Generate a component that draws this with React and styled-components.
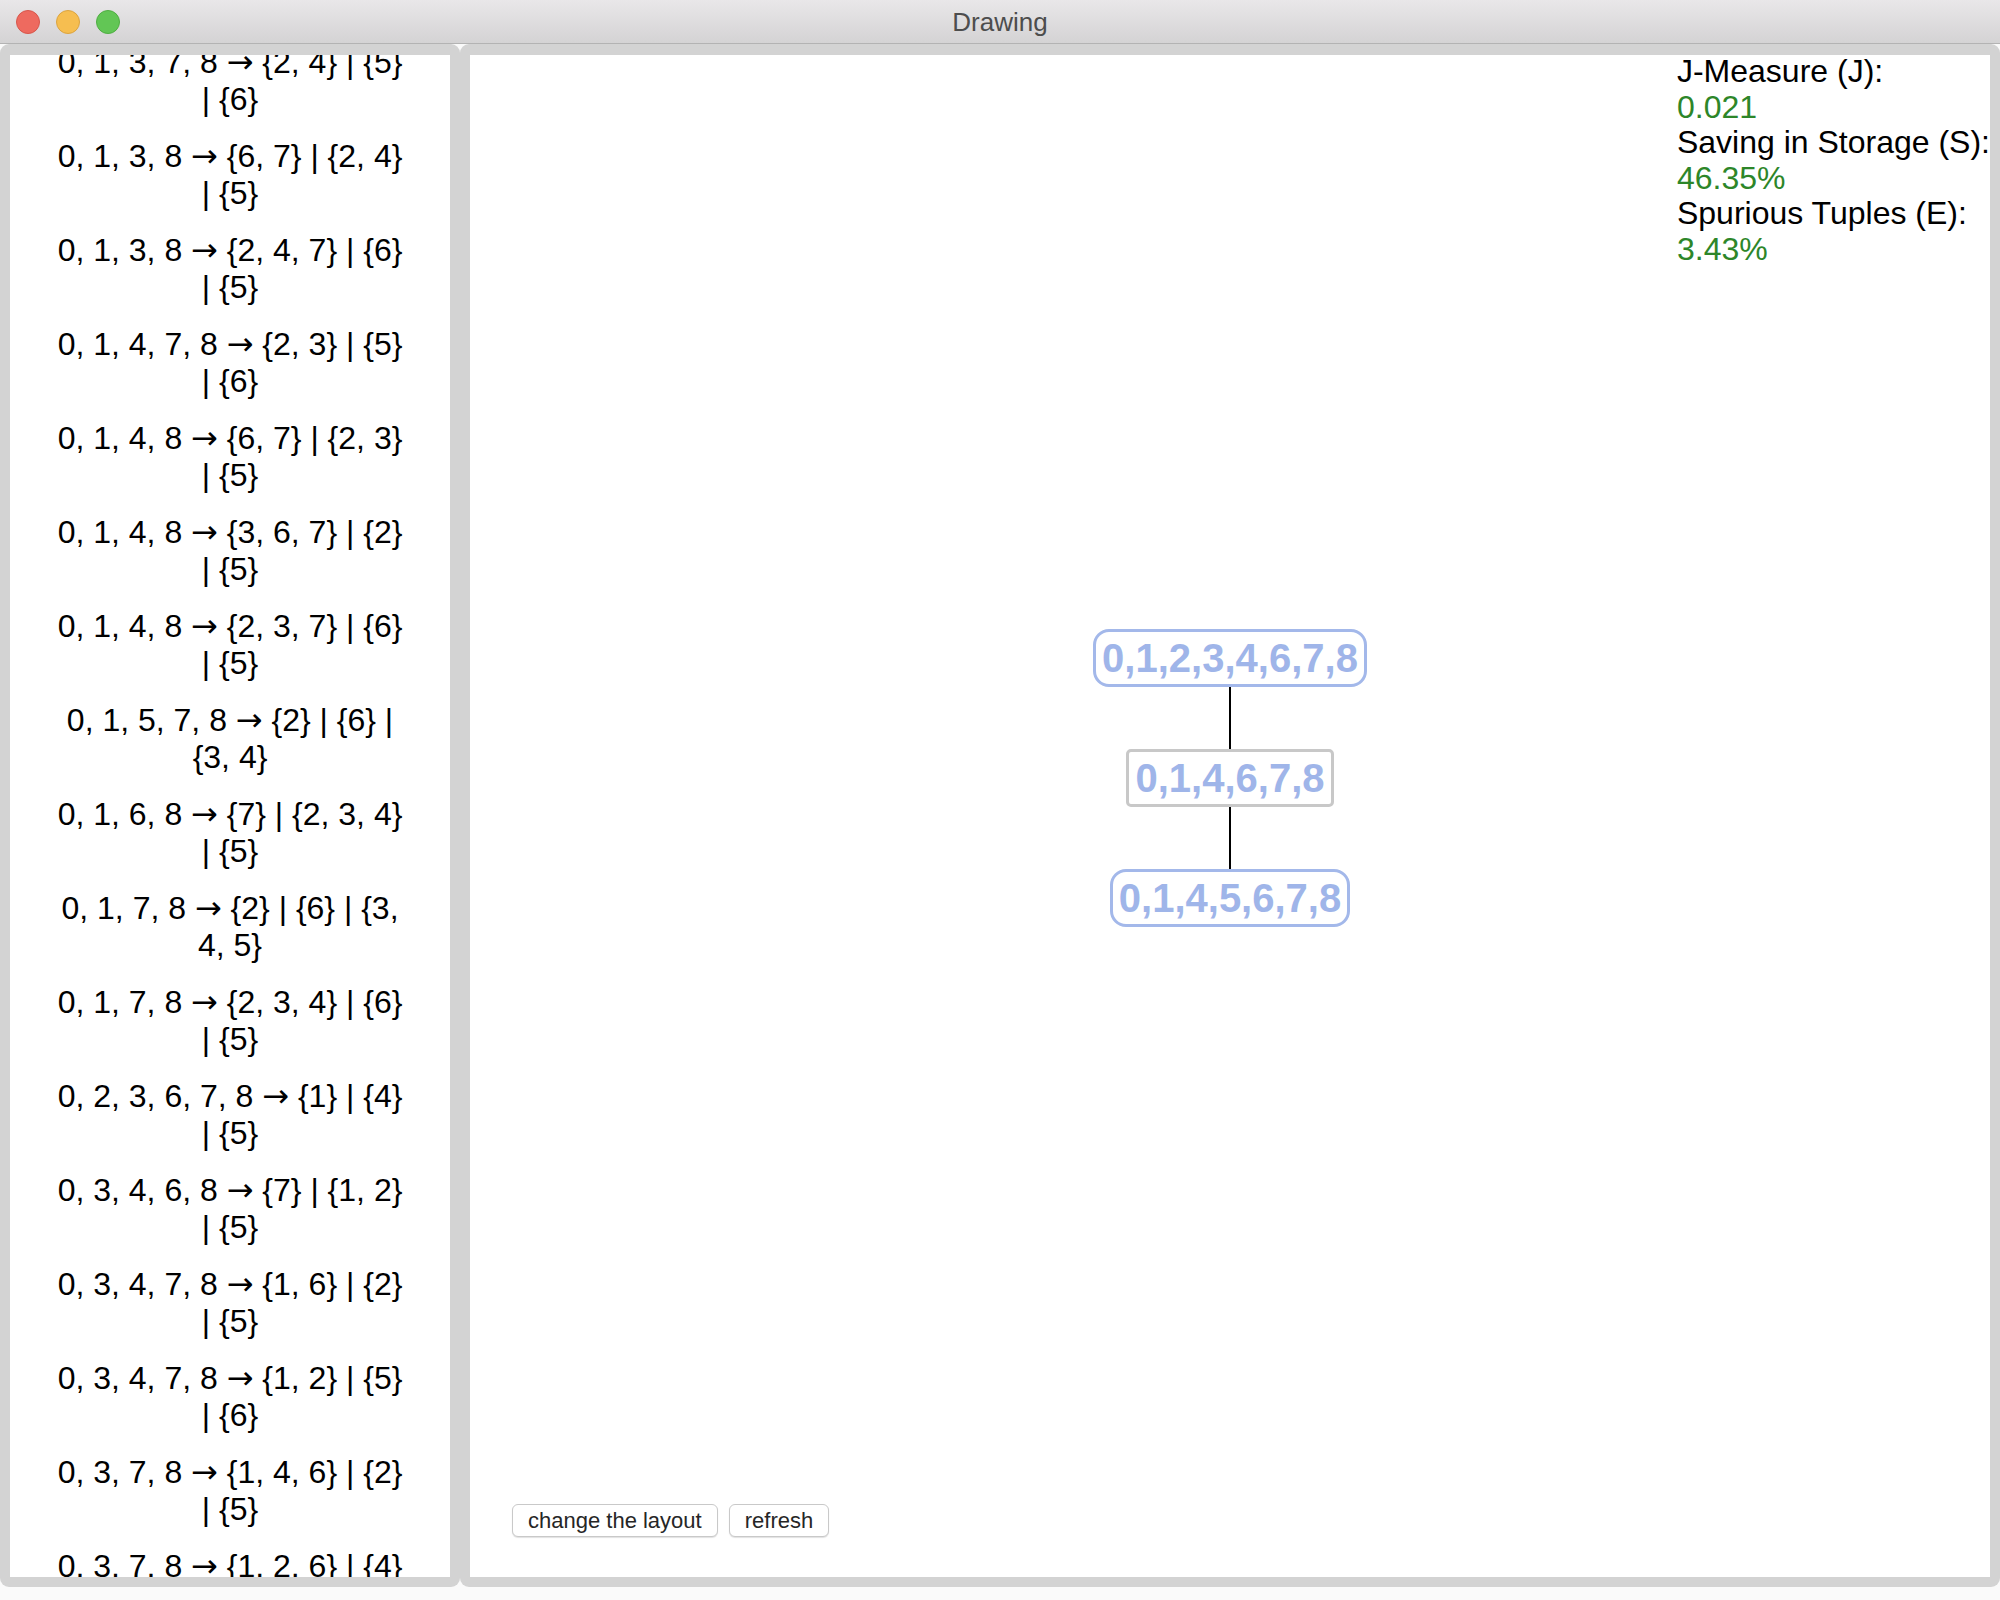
import { useLayoutEffect, useRef } from "react";
import styled, { createGlobalStyle } from "styled-components";

const GlobalStyle = createGlobalStyle`
    *, *::before, *::after {
        box-sizing: border-box;
    }
    html, body {
        margin: 0;
        padding: 0;
        width: 2000px;
        height: 1600px;
        overflow: hidden;
        font-family: "Liberation Sans", Helvetica, Arial, sans-serif;
    }
`;

const Window = styled.div`
    width: 2000px;
    height: 1600px;
    display: flex;
    flex-direction: column;
    background: #fafafa;
`;

const TitleBar = styled.div`
    height: 44px;
    border-bottom: 1px solid #b3b3b3;
    background: linear-gradient(#e9e7e9, #d4d3d4);
    display: grid;
    grid-template-columns: 1fr auto 1fr;
    align-items: center;
`;

const Lights = styled.div`
    display: flex;
    gap: 16px;
    padding-left: 16px;
`;

const Light = styled.span`
    width: 24px;
    height: 24px;
    border-radius: 50%;
    background: ${(p) => p.fill};
    border: 1px solid ${(p) => p.edge};
`;

const Title = styled.div`
    font-size: 26px;
    color: #4d4d4d;
    padding-top: 2px;
`;

const Body = styled.div`
    flex: 1;
    display: flex;
    padding-bottom: 13px;
    min-height: 0;
`;

const Panel = styled.div`
    background: #d3d3d3;
    border-radius: 9px;
    padding: 11px 10px 10px 10px;
    display: flex;
    min-height: 0;
    ${(p) => (p.grow ? "flex: 1;" : `width: ${p.width}px; flex: none;`)}
`;

const List = styled.div`
    flex: 1;
    background: #fff;
    overflow: hidden;
    position: relative;
    scrollbar-width: none;
`;

const Item = styled.div`
    padding: 10px 44px;
    font-size: 32px;
    line-height: 37px;
    text-align: center;
    color: #000;
`;

const Arrow = styled.span`
    font-family: "DejaVu Sans", sans-serif;
`;

const Canvas = styled.div`
    flex: 1;
    background: #fff;
    display: flex;
    flex-direction: column;
    overflow: hidden;
`;

const Stage = styled.div`
    flex: 1;
    position: relative;
`;

const Metrics = styled.div`
    position: absolute;
    top: -1px;
    right: 0;
    font-size: 32px;
    line-height: 35.6px;
    white-space: nowrap;
`;

const Label = styled.div`
    color: #000;
`;

const Value = styled.div`
    color: #2d8629;
`;

const Graph = styled.div`
    position: absolute;
    top: 574px;
    left: 0;
    right: 0;
    display: flex;
    flex-direction: column;
    align-items: center;
`;

const Node = styled.div`
    border: 3px solid ${(p) => (p.selected ? "#c8c8c8" : "#a3b8ea")};
    border-radius: ${(p) => (p.selected ? "5px" : "16px")};
    padding: 3px 6px;
    font-size: 40px;
    line-height: 46px;
    font-weight: bold;
    color: #9fb5e9;
    background: #fff;
`;

const Edge = styled.div`
    width: 2px;
    height: 62px;
    background: #000;
`;

const Toolbar = styled.div`
    display: flex;
    gap: 11px;
    padding: 0 0 40px 42px;
`;

const Button = styled.button`
    height: 33px;
    padding: 0 15px;
    font-family: "Liberation Sans", Helvetica, Arial, sans-serif;
    font-size: 22px;
    color: #262626;
    background: #fff;
    border: 1px solid #c9c9c9;
    border-radius: 6px;
    box-shadow: 0 1px 1px rgba(0, 0, 0, 0.12);
    cursor: pointer;
`;

const rules = [
    ["0, 1, 3, 7, 8", "{2, 4} | {5} | {6}"],
    ["0, 1, 3, 8", "{6, 7} | {2, 4} | {5}"],
    ["0, 1, 3, 8", "{2, 4, 7} | {6} | {5}"],
    ["0, 1, 4, 7, 8", "{2, 3} | {5} | {6}"],
    ["0, 1, 4, 8", "{6, 7} | {2, 3} | {5}"],
    ["0, 1, 4, 8", "{3, 6, 7} | {2} | {5}"],
    ["0, 1, 4, 8", "{2, 3, 7} | {6} | {5}"],
    ["0, 1, 5, 7, 8", "{2} | {6} | {3, 4}"],
    ["0, 1, 6, 8", "{7} | {2, 3, 4} | {5}"],
    ["0, 1, 7, 8", "{2} | {6} | {3, 4, 5}"],
    ["0, 1, 7, 8", "{2, 3, 4} | {6} | {5}"],
    ["0, 2, 3, 6, 7, 8", "{1} | {4} | {5}"],
    ["0, 3, 4, 6, 8", "{7} | {1, 2} | {5}"],
    ["0, 3, 4, 7, 8", "{1, 6} | {2} | {5}"],
    ["0, 3, 4, 7, 8", "{1, 2} | {5} | {6}"],
    ["0, 3, 7, 8", "{1, 4, 6} | {2} | {5}"],
    ["0, 3, 7, 8", "{1, 2, 6} | {4} | {5}"],
];

const metrics = [
    ["J-Measure (J):", "0.021"],
    ["Saving in Storage (S):", "46.35%"],
    ["Spurious Tuples (E):", "3.43%"],
];

function Rule({ lhs, rhs }) {
    return (
        <Item>
            {lhs} <Arrow>→</Arrow> {rhs}
        </Item>
    );
}

export default function App() {
    const listRef = useRef(null);

    // the list is scrolled a little way down in the screenshot
    useLayoutEffect(() => {
        if (listRef.current) {
            listRef.current.scrollTop = 21;
        }
    }, []);

    return (
        <Window>
            <GlobalStyle />
            <TitleBar>
                <Lights>
                    <Light fill="#ee6a5f" edge="#d8564b" />
                    <Light fill="#f6be50" edge="#dca43f" />
                    <Light fill="#62c655" edge="#4fae42" />
                </Lights>
                <Title>Drawing</Title>
                <div />
            </TitleBar>
            <Body>
                <Panel width={460}>
                    <List ref={listRef}>
                        {rules.map(([lhs, rhs], i) => (
                            <Rule key={i} lhs={lhs} rhs={rhs} />
                        ))}
                    </List>
                </Panel>
                <Panel grow>
                    <Canvas>
                        <Stage>
                            <Graph>
                                <Node>0,1,2,3,4,6,7,8</Node>
                                <Edge />
                                <Node selected>0,1,4,6,7,8</Node>
                                <Edge />
                                <Node>0,1,4,5,6,7,8</Node>
                            </Graph>
                            <Metrics>
                                {metrics.map(([label, value]) => (
                                    <div key={label}>
                                        <Label>{label}</Label>
                                        <Value>{value}</Value>
                                    </div>
                                ))}
                            </Metrics>
                        </Stage>
                        <Toolbar>
                            <Button>change the layout</Button>
                            <Button>refresh</Button>
                        </Toolbar>
                    </Canvas>
                </Panel>
            </Body>
        </Window>
    );
}
